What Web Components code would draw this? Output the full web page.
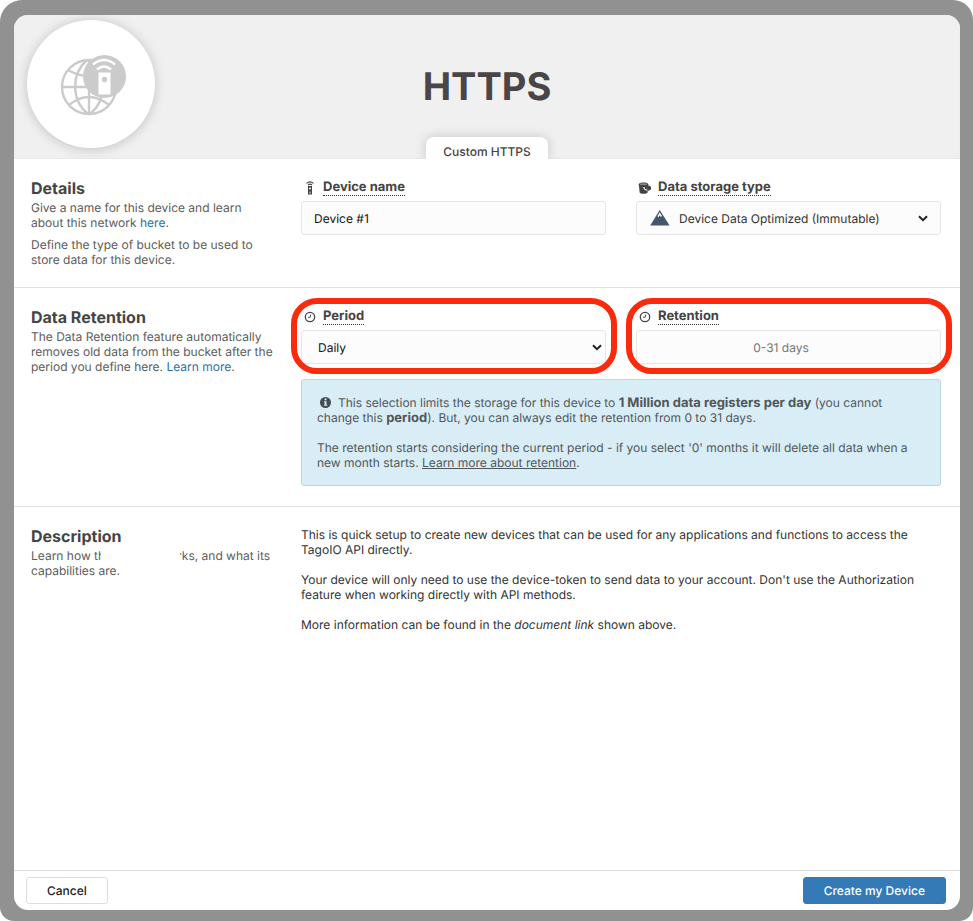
<!DOCTYPE html>
<html lang="en">
<head>
<meta charset="utf-8">
<meta name="viewport" content="width=device-width, initial-scale=1">
<title>Create device</title>
<style>
  html { background: #fff; }
  body {
    margin: 0;
    min-height: 100vh;
    box-sizing: border-box;
    display: flex;
    padding: 15px 13px 11px 14px;
    background: linear-gradient(#919191, #919191) no-repeat;
    border-radius: 22px 20px 14px 14px;
    font: 12px/15px Inter, "Liberation Sans", sans-serif;
    text-rendering: geometricPrecision;
    color: #333;
  }
  a { color: #2a6fad; text-decoration: none; }
  p { margin: 0; }
  setup-section p + p { margin-top: 7px; }
  .about p + p { margin-top: 15px; }
  info-box a { color: inherit; text-decoration: underline; }
  info-box b { font-size: 13px; line-height: 13px; }
</style>
</head>
<body>

<device-modal>
  <device-header slot="header" name="HTTPS" tab="Custom HTTPS"></device-header>

  <setup-section heading="Details">
    <p slot="help">Give a name for this device and learn about this network <a href="#">here</a>.</p>
    <p slot="help">Define the type of bucket to be used to store data for this device.</p>
    <field-row>
      <form-field label="Device name" icon="device" type="text" value="Device #1"></form-field>
      <form-field label="Data storage type" icon="bucket" type="storage" options="Device Data Optimized (Immutable)|Device Data Optimized (Mutable)"></form-field>
    </field-row>
  </setup-section>

  <setup-section heading="Data Retention">
    <p slot="help">The Data Retention feature automatically removes old data from the bucket after the period you define here. <a href="#">Learn more</a>.</p>
    <field-row>
      <form-field label="Period" icon="clock" type="select" options="Daily|Weekly|Monthly" highlight></form-field>
      <form-field label="Retention" icon="clock" type="number" placeholder="0-31 days" highlight></form-field>
    </field-row>
    <info-box>This selection limits the storage for this device to <b>1 Million data registers per day</b> (you cannot change this <b>period</b>). But, you can always edit the retention from 0 to 31 days.<br><br>The retention starts considering the current period - if you select '0' months it will delete all data when a new month starts. <a href="#">Learn more about retention</a>.</info-box>
  </setup-section>

  <setup-section heading="Description" last>
    <p slot="help">Learn how th<text-gap></text-gap>rks, and what its capabilities are.</p>
    <div class="about">
      <p>This is quick setup to create new devices that can be used for any applications and functions to access the TagoIO API directly.</p>
      <p>Your device will only need to use the device-token to send data to your account. Don't use the Authorization feature when working directly with API methods.</p>
      <p>More information can be found in the <em>document link</em> shown above.</p>
    </div>
  </setup-section>

  <action-button slot="footer">Cancel</action-button>
  <action-button slot="footer" primary>Create my Device</action-button>
</device-modal>

<script>
const icons = {
  device: `<svg width="12" height="14" viewBox="0 0 12 14" fill="none" stroke="#444">
    <path d="M2.5 2.4Q6 -.6 9.500 2.400M4 4Q6 2.300 8 4" stroke-width="1.100"/>
    <path d="M4 5h4v8.500H4z" fill="#444" stroke="none"/>
    <circle cx="6" cy="7.500" r="1" fill="#fff" stroke="none"/>
    <path d="M5 10.500h2v2H5z" fill="#999" stroke="none"/></svg>`,
  bucket: `<svg width="14" height="14" viewBox="0 0 14 14">
    <path d="M.8 3.200C.8 1 10.300 1 10.300 3.200L9.500 11.700C8.500 13 2.700 13 1.700 11.700z" fill="#444"/>
    <ellipse cx="5.500" cy="3.200" rx="3.600" ry=".9" fill="#888"/>
    <path d="M5.800 6C6 8 7.400 9 9 9.200" fill="none" stroke="#fff" stroke-width="1.100"/>
    <path d="M10 4.500C12.500 4.500 13.500 6 13 8.500L10 10z" fill="#444"/></svg>`,
  clock: `<svg width="12" height="12" viewBox="0 0 12 12" fill="none" stroke="#444">
    <circle cx="6" cy="6" r="4.700" stroke-width="1.300"/>
    <path d="M6.700 3.500L6.300 6.300H3.900" stroke-width=".9"/></svg>`,
  mountain: `<svg width="20" height="16" viewBox="0 0 20 16">
    <path d="M9.700 0L19.600 15.500H.2z" fill="#44566b"/>
    <path d="M9.700 2.200L12 6 10.800 7 9.900 5.400 8.300 7.300 7.300 6.200z" fill="#e8eef3"/></svg>`,
  info: `<svg width="11" height="11" viewBox="0 0 11 11">
    <circle cx="5.500" cy="5.500" r="5.500" fill="#444b50"/>
    <path d="M4.600 1.600h1.900v1.600H4.600zM3.900 4.200h2.600v3.600h.8v1H3.900v-1h.7V5.200h-.7z" fill="#d9edf7"/></svg>`,
  chevron: `<svg width="10" height="7" viewBox="0 0 10 7" fill="none" stroke="#222" stroke-width="2">
    <path d="M1 1.200L5 5.200 9 1.200"/></svg>`,
  network: `<svg width="70" height="64" viewBox="0 -1 70 64" fill="none" stroke="#cbcbcb" stroke-width="2.400">
    <circle cx="33" cy="34" r="27"/>
    <path d="M33 7v54M6 34h54M12 17Q33 29 54 17M13 52Q33 36 53 52"/>
    <path d="M31 7C15 21 15 47 32 61M35 7C51 21 51 47 34 61"/>
    <circle cx="48.500" cy="23.500" r="21.500" fill="#cbcbcb" stroke="none"/>
    <g stroke="#fff" stroke-width="2.600"><path d="M37 11.500Q48 2.500 59 11.500M41 16.500Q48 10.500 55 16.500"/></g>
    <path d="M42.500 19.500h12v22h-12z" fill="#fff" stroke="none"/>
    <circle cx="48.500" cy="26.500" r="2.700" fill="#cbcbcb" stroke="none"/></svg>`
};

class DeviceModal extends HTMLElement {
  constructor() {
    super();
    this._root = this.attachShadow({ mode: 'open' });
    this._root.innerHTML = `
      <style>
        :host {
          flex: 1;
          min-width: 0;
          display: flex;
          flex-direction: column;
          background: #fff;
          border-radius: 14px;
          overflow: hidden;
        }
        main { flex: 1; }
        footer {
          display: flex;
          justify-content: space-between;
          padding: 6px 14px 6px 12px;
          border-top: 1px solid #ddd;
        }
      </style>
      <slot name="header"></slot>
      <main><slot></slot></main>
      <footer><slot name="footer"></slot></footer>
    `;
  }
}

class DeviceHeader extends HTMLElement {
  constructor() {
    super();
    this._root = this.attachShadow({ mode: 'open' });
    this._root.innerHTML = `
      <style>
        :host {
          display: grid;
          grid-template-columns: 1fr auto 1fr;
          height: 144px;
          box-sizing: border-box;
          padding: 5px 13px 0;
          background: #f0f0f0;
          box-shadow: inset 0 -1px 2px #e8e8e8;
          overflow: hidden;
        }
        .logo {
          width: 128px;
          height: 128px;
          display: flex;
          align-items: center;
          justify-content: center;
          border-radius: 50%;
          background: #fff;
          box-shadow: 0 1px 12px rgba(0, 0, 0, .2);
        }
        .title {
          display: flex;
          flex-direction: column;
          align-items: center;
          justify-content: space-between;
        }
        h1 {
          margin: 43px 0 0;
          font-size: 38px;
          line-height: 48px;
          font-weight: 700;
          color: #4a4546;
        }
        .tab {
          padding: 7px 17px 0;
          border-radius: 8px 8px 0 0;
          background: #fff;
          box-shadow: 0 0 12px rgba(0, 0, 0, .18);
          font-weight: 500;
          color: #444;
        }
      </style>
      <div class="logo">${icons.network}</div>
      <div class="title">
        <h1>${this.getAttribute('name')}</h1>
        <div class="tab">${this.getAttribute('tab')}</div>
      </div>
    `;
  }
}

class SetupSection extends HTMLElement {
  constructor() {
    super();
    this._root = this.attachShadow({ mode: 'open' });
    this._root.innerHTML = `
      <style>
        :host {
          display: grid;
          grid-template-columns: 245px minmax(0, 1fr);
          column-gap: 25px;
          padding: 19px 19px 20px 17px;
          border-bottom: 1px solid #e2e2e2;
        }
        :host([last]) { border-bottom: 0; }
        h2 {
          margin: 0 0 1px;
          font-size: 16px;
          line-height: 21px;
          font-weight: 700;
          color: #444;
        }
        .help { color: #5c5c5c; }
        .content {
          display: flex;
          flex-direction: column;
          gap: 15px;
          padding-top: 1px;
        }
      </style>
      <div class="help">
        <h2>${this.getAttribute('heading')}</h2>
        <slot name="help"></slot>
      </div>
      <div class="content"><slot></slot></div>
    `;
  }
}

class FieldRow extends HTMLElement {
  constructor() {
    super();
    this._root = this.attachShadow({ mode: 'open' });
    this._root.innerHTML = `
      <style>
        :host {
          display: grid;
          grid-template-columns: 1fr 1fr;
          gap: 30px;
        }
      </style>
      <slot></slot>
    `;
  }
}

class FormField extends HTMLElement {
  constructor() {
    super();
    this._root = this.attachShadow({ mode: 'open' });
    this._root.innerHTML = `
      <style>
        :host { display: block; position: relative; }
        .head {
          display: flex;
          align-items: center;
          gap: 5px;
          margin-bottom: 5px;
        }
        .icon {
          display: flex;
          justify-content: center;
          width: 17px;
        }
        label {
          border-bottom: 1px dotted #333;
          font-size: 13px;
          line-height: 16px;
          font-weight: 700;
          color: #444;
        }
        .box { position: relative; }
        input, select {
          display: block;
          width: 100%;
          height: 34px;
          margin: 0;
          padding: 0 12px;
          box-sizing: border-box;
          border: 1px solid #e6e6e6;
          border-radius: 3px;
          background: #fcfcfc;
          font: inherit;
          text-rendering: inherit;
          color: #111;
          appearance: none;
          outline: none;
        }
        select { padding: 0 16px; }
        .storage select { padding-left: 42px; color: #333; }
        input[inputmode] { padding: 0 27px 0 12px; text-align: center; }
        input[inputmode]::placeholder { color: #757575; }
        .lead, .arrow {
          position: absolute;
          top: 0;
          bottom: 0;
          display: flex;
          align-items: center;
          pointer-events: none;
        }
        .lead { left: 14px; }
        .arrow { right: 4px; }
        .storage .arrow { right: 13px; }
        .ring { display: none; }
        :host([highlight]) .ring {
          display: block;
          position: absolute;
          inset: -10px -11px -10px -10px;
          border: 6px solid #f92b0c;
          border-radius: 26px;
          pointer-events: none;
        }
      </style>
      <div class="head">
        <span class="icon">${icons[this.getAttribute('icon')]}</span>
        <label for="control">${this.getAttribute('label')}</label>
      </div>
      <div class="box ${this.getAttribute('type')}">${this.control()}</div>
      <div class="ring"></div>
    `;
  }

  control() {
    const type = this.getAttribute('type');
    if (type === 'text') {
      return `<input id="control" type="text" value="${this.getAttribute('value')}">`;
    }
    if (type === 'number') {
      return `<input id="control" type="text" inputmode="numeric" placeholder="${this.getAttribute('placeholder')}">`;
    }
    const options = this.getAttribute('options').split('|').map(o => `<option>${o}</option>`).join('');
    const lead = type === 'storage' ? `<span class="lead">${icons.mountain}</span>` : '';
    return `<select id="control">${options}</select>${lead}<span class="arrow">${icons.chevron}</span>`;
  }
}

class InfoBox extends HTMLElement {
  constructor() {
    super();
    this._root = this.attachShadow({ mode: 'open' });
    this._root.innerHTML = `
      <style>
        :host {
          display: block;
          padding: 15px;
          border: 1px solid #bcd5df;
          border-radius: 3px;
          background: #d9edf7;
          color: #50575b;
        }
        svg { margin: 0 7px 0 3px; vertical-align: -1px; }
      </style>
      ${icons.info}<slot></slot>
    `;
  }
}

class TextGap extends HTMLElement {
  constructor() {
    super();
    this._root = this.attachShadow({ mode: 'open' });
    this._root.innerHTML = `
      <style>
        :host {
          display: inline-block;
          position: relative;
          width: 79px;
          height: 15px;
          margin: 0 -3px 0 -4px;
          vertical-align: top;
          background: #fff;
        }
      </style>
    `;
  }
}

class ActionButton extends HTMLElement {
  constructor() {
    super();
    this._root = this.attachShadow({ mode: 'open' });
    this._root.innerHTML = `
      <style>
        :host { display: block; }
        button {
          height: 27px;
          padding: 0 20px;
          border: 1px solid #ddd;
          border-radius: 3px;
          background: #fff;
          font: inherit;
          font-weight: 500;
          text-rendering: inherit;
          color: #222;
        }
        :host([primary]) button {
          border-color: #337ab7;
          background: #337ab7;
          color: #fff;
        }
      </style>
      <button type="button"><slot></slot></button>
    `;
  }
}

window.customElements.define('device-modal', DeviceModal);
window.customElements.define('device-header', DeviceHeader);
window.customElements.define('setup-section', SetupSection);
window.customElements.define('field-row', FieldRow);
window.customElements.define('form-field', FormField);
window.customElements.define('info-box', InfoBox);
window.customElements.define('text-gap', TextGap);
window.customElements.define('action-button', ActionButton);
</script>
</body>
</html>
